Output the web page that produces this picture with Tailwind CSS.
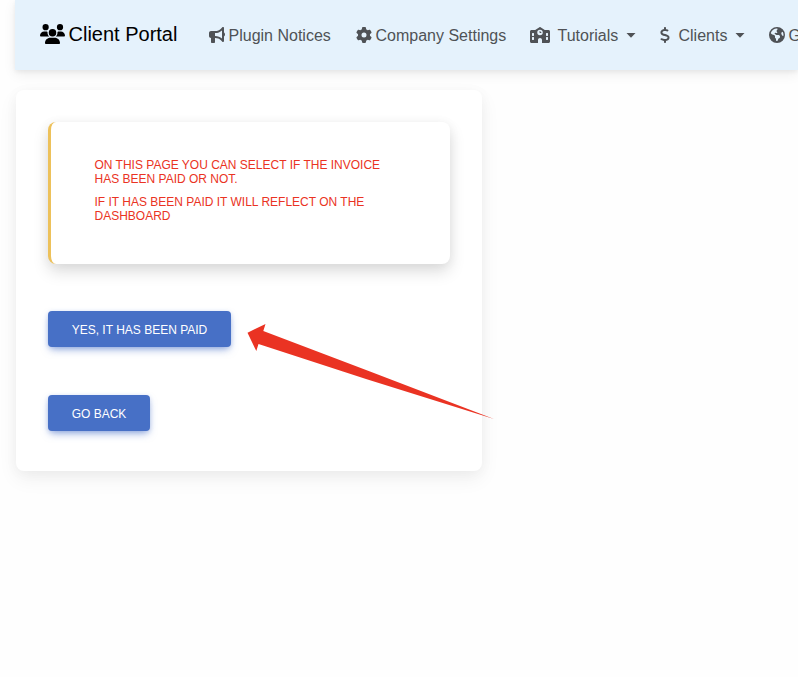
<!DOCTYPE html>
<html lang="en">
<head>
<meta charset="utf-8">
<title>Client Portal</title>
<script src="https://cdn.jsdelivr.net/npm/@tailwindcss/browser@4"></script>
</head>
<body class="relative h-[677px] overflow-hidden bg-[#fefefe] font-['Liberation_Sans',Arial,sans-serif]">
<nav class="ml-[15px] flex h-[70px] items-center bg-[#e5f2fc] pl-[24.500px] whitespace-nowrap text-[16px] text-[#4f5256] shadow-[0_4px_12px_0_rgba(0,0,0,0.07),0_2px_4px_rgba(0,0,0,0.05)]">
  <a class="flex w-[169px] shrink-0 items-center gap-1 pb-[2px] text-[20px] text-black">
    <svg class="h-5 w-[25px] shrink-0" viewBox="0 0 640 512" fill="currentColor"><path d="M144 0a80 80 0 1 1 0 160A80 80 0 1 1 144 0zM512 0a80 80 0 1 1 0 160A80 80 0 1 1 512 0zM0 298.7C0 239.8 47.8 192 106.7 192h42.7c15.9 0 31 3.5 44.6 9.7c-1.3 7.2-1.9 14.7-1.9 22.3c0 38.2 16.8 72.5 43.3 96c-.2 0-.4 0-.7 0H21.3C9.6 320 0 310.4 0 298.7zM405.3 320c-.2 0-.4 0-.7 0c26.6-23.5 43.3-57.8 43.3-96c0-7.6-.7-15-1.9-22.3c13.6-6.3 28.7-9.7 44.6-9.7h42.7C592.2 192 640 239.8 640 298.7c0 11.8-9.6 21.3-21.3 21.3H405.3zM224 224a96 96 0 1 1 192 0 96 96 0 1 1-192 0zM128 485.3C128 411.7 187.7 352 261.3 352H378.7C452.3 352 512 411.7 512 485.3c0 14.7-11.9 26.7-26.7 26.7H154.7c-14.7 0-26.7-11.9-26.7-26.7z"/></svg>
    <span>Client Portal</span>
  </a>
  <a class="flex w-[147px] shrink-0 items-center gap-1">
    <svg class="size-4 shrink-0" viewBox="0 0 512 512" fill="currentColor"><path d="M480 32c0-12.9-7.8-24.6-19.8-29.6s-25.7-2.2-34.9 6.9L381.7 53c-48 48-113.1 75-181 75H192 160 64c-35.3 0-64 28.7-64 64v96c0 35.3 28.7 64 64 64l0 128c0 17.700 14.300 32 32 32h64c17.700 0 32-14.300 32-32V352l8.700 0c67.900 0 133 27 181 75l43.600 43.600c9.200 9.200 22.900 11.900 34.900 6.900s19.800-16.600 19.800-29.600V300.400c18.600-8.800 32-32.500 32-60.400s-13.400-51.600-32-60.400V32zm-64 76.700V240 371.300C357.200 317.800 280.500 288 200.700 288H192V192h8.700c79.800 0 156.500-29.800 215.300-83.300z"/></svg>
    <span class="pt-[2px]">Plugin Notices</span>
  </a>
  <a class="flex w-[174px] shrink-0 items-center gap-1">
    <svg class="size-4 shrink-0" viewBox="0 0 512 512" fill="currentColor"><path d="M495.9 166.6c3.2 8.7 .5 18.4-6.4 24.6l-43.3 39.4c1.1 8.3 1.7 16.8 1.7 25.4s-.6 17.1-1.7 25.4l43.3 39.4c6.9 6.2 9.6 15.9 6.4 24.6c-4.400 11.900-9.700 23.300-15.800 34.300l-4.700 8.100c-6.600 11-14 21.400-22.100 31.200c-5.900 7.200-15.700 9.600-24.500 6.800l-55.700-17.700c-13.400 10.300-28.200 18.900-44 25.400l-12.500 57.100c-2 9.100-9 16.300-18.200 17.800c-13.800 2.300-28 3.500-42.500 3.500s-28.700-1.200-42.500-3.500c-9.200-1.500-16.200-8.700-18.200-17.800l-12.500-57.100c-15.800-6.500-30.600-15.100-44-25.400L83.100 425.900c-8.800 2.800-18.600 .3-24.500-6.800c-8.100-9.800-15.500-20.200-22.100-31.200l-4.700-8.100c-6.100-11-11.400-22.400-15.800-34.300c-3.200-8.700-.5-18.400 6.400-24.600l43.300-39.400C64.600 273.100 64 264.600 64 256s.6-17.100 1.700-25.400L22.400 191.200c-6.900-6.200-9.600-15.900-6.400-24.600c4.400-11.900 9.700-23.300 15.800-34.300l4.700-8.100c6.600-11 14-21.400 22.100-31.200c5.900-7.200 15.700-9.600 24.500-6.800l55.700 17.700c13.400-10.300 28.200-18.900 44-25.400l12.500-57.100c2-9.100 9-16.300 18.200-17.800C227.300 1.200 241.500 0 256 0s28.700 1.200 42.500 3.500c9.200 1.500 16.200 8.700 18.200 17.800l12.500 57.100c15.800 6.500 30.600 15.100 44 25.400l55.700-17.700c8.800-2.800 18.600-.3 24.500 6.800c8.100 9.800 15.500 20.200 22.100 31.200l4.700 8.100c6.100 11 11.400 22.400 15.800 34.300zM256 336a80 80 0 1 0 0-160 80 80 0 1 0 0 160z"/></svg>
    <span class="pt-[2px]">Company Settings</span>
  </a>
  <a class="flex w-[130px] shrink-0 items-center">
    <svg class="h-4 w-5 shrink-0" viewBox="0 0 640 512" fill="currentColor"><path fill-rule="evenodd" d="M337.800 5.400C327-1.800 313-1.800 302.200 5.400L166.300 96H48C21.500 96 0 117.500 0 144V464c0 26.500 21.500 48 48 48H256V416c0-35.300 28.700-64 64-64s64 28.700 64 64v96H592c26.500 0 48-21.500 48-48V144c0-26.500-21.500-48-48-48H473.700L337.800 5.400zM80 192h32c8.800 0 16 7.200 16 16v64c0 8.800-7.200 16-16 16H80c-8.800 0-16-7.200-16-16V208c0-8.800 7.200-16 16-16zm448 0h32c8.800 0 16 7.200 16 16v64c0 8.800-7.200 16-16 16H528c-8.800 0-16-7.200-16-16V208c0-8.800 7.200-16 16-16zM80 320h32c8.800 0 16 7.200 16 16v64c0 8.800-7.200 16-16 16H80c-8.800 0-16-7.200-16-16V336c0-8.800 7.200-16 16-16zm448 0h32c8.800 0 16 7.200 16 16v64c0 8.800-7.200 16-16 16H528c-8.800 0-16-7.200-16-16V336c0-8.800 7.200-16 16-16zM320 88a88 88 0 1 0 0 176a88 88 0 1 0 0-176zm0 40c8.800 0 16 7.200 16 16v16h16c8.800 0 16 7.200 16 16s-7.200 16-16 16H320c-8.800 0-16-7.200-16-16V144c0-8.800 7.200-16 16-16z"/></svg>
    <span class="ml-2 pt-[2px]">Tutorials</span>
    <svg class="ml-2 h-[5px] w-[10px]" viewBox="0 0 10 5" fill="currentColor"><path d="M.5 0h9L5 4.800z"/></svg>
  </a>
  <a class="flex w-[109px] shrink-0 items-center">
    <svg class="h-4 w-[10px] shrink-0" viewBox="0 0 320 512" fill="currentColor"><path d="M160 0c17.700 0 32 14.300 32 32V67.700c1.600 .2 3.100 .4 4.700 .7c.4 .1 .7 .1 1.100 .2l48 8.800c17.400 3.200 28.900 19.900 25.700 37.200s-19.900 28.900-37.200 25.700l-47.500-8.700c-31.300-4.600-58.900-1.500-78.300 6.200s-27.200 18.300-29 28.100c-2 10.700-.5 16.700 1.200 20.400c1.800 3.900 5.500 8.300 12.800 13.200c16.300 10.700 41.300 17.700 73.700 26.300l2.900 .8c28.600 7.600 63.600 16.800 89.600 33.800c14.200 9.300 27.600 21.900 35.900 39.500c8.500 17.900 10.300 37.900 6.400 59.200c-6.900 38-33.100 63.400-65.600 76.700c-13.700 5.600-28.600 9.200-44.400 11V480c0 17.700-14.300 32-32 32s-32-14.300-32-32V445.100c-.4-.1-.9-.1-1.300-.2l-.2 0c-24.400-3.800-64.500-14.300-91.500-26.300c-16.100-7.200-23.400-26.100-16.200-42.200s26.100-23.400 42.200-16.200c20.900 9.300 55.300 18.500 75.200 21.600c31.900 4.700 58.200 2 76-5.300c16.900-6.900 24.600-16.900 26.800-28.900c1.900-10.600 .4-16.700-1.300-20.400c-1.900-4-5.600-8.400-13-13.300c-16.400-10.700-41.500-17.700-74-26.300l-2.800-.7C119.400 279.300 84.400 270 58.400 253c-14.200-9.300-27.500-22-35.800-39.600c-8.400-17.900-10.100-37.900-6.100-59.200C23.700 116 52.300 91.200 84.800 78.300c13.300-5.300 27.900-8.900 43.200-11V32c0-17.700 14.300-32 32-32z"/></svg>
    <span class="ml-[9px] pt-[2px]">Clients</span>
    <svg class="ml-2 h-[5px] w-[10px]" viewBox="0 0 10 5" fill="currentColor"><path d="M.5 0h9L5 4.800z"/></svg>
  </a>
  <a class="flex min-w-0 flex-1 items-center gap-1 overflow-hidden">
    <svg class="size-4 shrink-0" viewBox="0 0 512 512" fill="currentColor"><path d="M57.7 193l9.400 16.400c8.300 14.500 21.900 25.200 38 29.800L163 255.700c17.200 4.900 29 20.600 29 38.500v39.900c0 11 6.200 21 16 25.900s16 14.900 16 25.900v39c0 15.600 14.900 26.900 29.900 22.600c16.100-4.600 28.600-17.500 32.700-33.800l2.800-11.200c4.200-16.900 15.200-31.400 30.300-40l8.100-4.600c15-8.500 24.200-24.500 24.200-41.700v-8.300c0-12.700-5.100-24.900-14.100-33.900l-3.900-3.900c-9-9-21.200-14.100-33.900-14.100H257c-11.100 0-22.100-2.900-31.800-8.400l-34.500-19.700c-4.300-2.500-7.600-6.500-9.200-11.200c-3.200-9.600 1.100-20 10.200-24.500l5.900-3c6.600-3.300 14.300-3.900 21.300-1.500l23.200 7.700c8.200 2.700 17.200-.4 21.900-7.500c4.700-7 4.200-16.300-1.200-22.800l-13.600-16.300c-10-12-9.900-29.500 .3-41.300l15.700-18.300c8.800-10.300 10.200-25 3.500-36.700l-2.400-4.200c-3.500-.2-6.900-.3-10.400-.3C163.100 48 84.400 108.900 57.700 193zM464 256c0-36.800-9.600-71.400-26.400-101.500L412 164.800c-15.700 6.300-23.800 23.800-18.500 39.800l16.900 50.700c3.500 10.400 12 18.300 22.600 20.900l29.100 7.300c1.200-9 1.800-18.200 1.800-27.500zM0 256a256 256 0 1 1 512 0A256 256 0 1 1 0 256z"/></svg>
    <span class="pt-[2px]">G</span>
  </a>
</nav>
<main class="mt-5 ml-4 flex h-[381px] w-[466px] flex-col items-start rounded-lg bg-white p-8 shadow-[0_8px_20px_rgba(0,0,0,0.06),0_2px_14px_rgba(0,0,0,0.035)]">
  <section class="h-[142px] w-[402px] shrink-0 rounded-lg border-l-[3px] border-[#edc15a] bg-white pt-9 pl-[43.500px] text-[12px] leading-[14.400px] text-[#ea3323] shadow-[0_8px_16px_rgba(0,0,0,0.13),0_1px_12px_rgba(0,0,0,0.05)]">
    <p class="whitespace-nowrap">ON THIS PAGE YOU CAN SELECT IF THE INVOICE<br>HAS BEEN PAID OR NOT.</p>
    <p class="mt-2 whitespace-nowrap">IF IT HAS BEEN PAID IT WILL REFLECT ON THE<br>DASHBOARD</p>
  </section>
  <button class="mt-[47px] h-9 w-[183px] shrink-0 rounded bg-[#4770c6] pt-[2px] text-[12px] whitespace-nowrap text-white shadow-[0_4px_8px_-2px_rgba(71,112,198,0.6),0_1px_4px_rgba(71,112,198,0.2)]">YES, IT HAS BEEN PAID</button>
  <button class="mt-12 h-9 w-[102px] shrink-0 rounded bg-[#4770c6] pt-[2px] text-[12px] whitespace-nowrap text-white shadow-[0_4px_8px_-2px_rgba(71,112,198,0.6),0_1px_4px_rgba(71,112,198,0.2)]">GO BACK</button>
</main>
<svg class="absolute top-[320px] left-[244px] h-[104px] w-[252px]" viewBox="244 320 252 104" fill="#ea3323"><path d="M247.500 332.700L265.500 324L263.300 331L370 371.500L494 419L366 379L258.500 344L256.300 351z"/></svg>
</body>
</html>
